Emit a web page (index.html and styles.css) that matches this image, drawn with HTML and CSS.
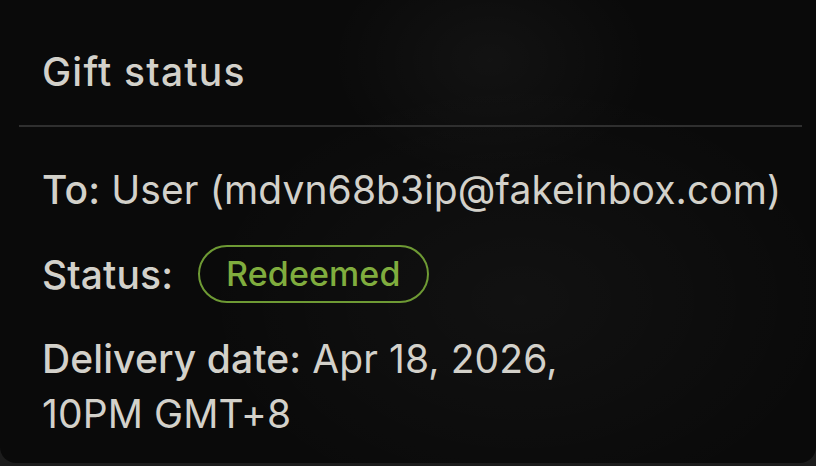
FILE: index.html
```html
<!DOCTYPE html>
<html lang="en">
<head>
    <meta charset="UTF-8">
    <meta name="viewport" content="width=device-width, initial-scale=1.0">
    <title>Gift status</title>
    <link rel="stylesheet" href="styles.css">
</head>
<body>
    <div class="gift-card">
        <header class="gift-header">
            <h2>Gift status</h2>
        </header>

        <div class="gift-details">
            <p class="row"><span class="label">To:</span> User (mdvn68b3ip@fakeinbox.com)</p>
            <p class="row status-row">
                <span class="label">Status:</span>
                <span class="pill">Redeemed</span>
            </p>
            <p class="row"><span class="label">Delivery date:</span> Apr 18, 2026, <span class="nowrap">10PM GMT+8</span></p>
        </div>
    </div>
</body>
</html>
```

FILE: styles.css
```css
body {
    margin: 0;
    padding: 0;
    background-color: #1c1c1c;
    font-family: Inter, "Liberation Sans", Arial, sans-serif;
    color: #d3d1ca;
}
.gift-card {
    height: 463px;
    box-sizing: border-box;
    padding: 0 14px 0 19px;
    border-radius: 0 0 16px 16px;
    overflow: hidden;
    background-color: #0a0a0a;
    background-image:
        radial-gradient(ellipse 160px 120px at 490px 60px, rgba(255, 255, 255, 0.035), transparent),
        radial-gradient(ellipse 320px 220px at 520px 300px, rgba(255, 255, 255, 0.03), transparent);
}
.gift-header {
    padding: 47px 23px 0;
    height: 78px;
    border-bottom: 2px solid #2f2f2f;
}
.gift-header h2 {
    margin: 0;
    font-size: 39px;
    font-weight: 500;
    letter-spacing: 1.2px;
    line-height: 50px;
}
.gift-details {
    max-width: 745px;
    padding: 35px 0 0 23px;
}
.row {
    margin: 0 0 28px;
    font-size: 39px;
    letter-spacing: 0.1px;
    line-height: 55px;
}
.label {
    font-weight: 500;
}
.nowrap {
    white-space: nowrap;
}
.status-row {
    display: flex;
    align-items: center;
    gap: 25px;
}
.pill {
    display: inline-block;
    padding: 0 26px;
    font-size: 34px;
    line-height: 54px;
    border: 2px solid #6e9a34;
    border-radius: 30px;
    color: #80ad3e;
    font-weight: 500;
}
```
